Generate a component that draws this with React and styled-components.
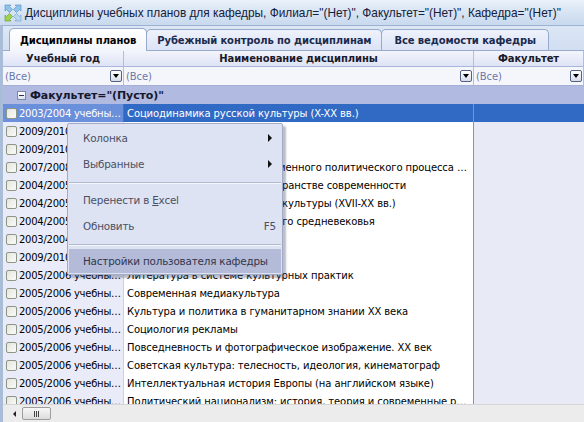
import React from "react";
import styled, { createGlobalStyle } from "styled-components";

const GlobalStyle = createGlobalStyle`
  html, body {
    margin: 0;
    padding: 0;
    background: #d4e0f1;
  }
  * {
    box-sizing: border-box;
  }
`;

const rows = [
  ["2003/2004 учебный год", "Социодинамика русской культуры (X-XX вв.)"],
  ["2009/2010 учебный год", "Культурология"],
  ["2009/2010 учебный год", "Теория культуры"],
  ["2007/2008 учебный год", "Особенности развития современного политического процесса в России"],
  ["2004/2005 учебный год", "Культура и искусство в пространстве современности"],
  ["2004/2005 учебный год", "Социальная история русской культуры (XVII-XX вв.)"],
  ["2004/2005 учебный год", "Культура западноевропейского средневековья"],
  ["2003/2004 учебный год", "Социология культуры"],
  ["2009/2010 учебный год", "Культурология"],
  ["2005/2006 учебный год", "Литература в системе культурных практик"],
  ["2005/2006 учебный год", "Современная медиакультура"],
  ["2005/2006 учебный год", "Культура и политика в гуманитарном знании XX века"],
  ["2005/2006 учебный год", "Социология рекламы"],
  ["2005/2006 учебный год", "Повседневность и фотографическое изображение. XX век"],
  ["2005/2006 учебный год", "Советская культура: телесность, идеология, кинематограф"],
  ["2005/2006 учебный год", "Интеллектуальная история Европы (на английском языке)"],
  ["2005/2006 учебный год", "Политический национализм: история, теория и современные реалии"],
];

const Window = styled.div`
  position: relative;
  width: 584px;
  height: 422px;
  overflow: hidden;
  display: flex;
  flex-direction: column;
  font-family: "DejaVu Sans", "Liberation Sans", sans-serif;
  font-size: 10px;
  letter-spacing: -0.1px;
  color: #000;
`;

const TitleBar = styled.div`
  height: 25px;
  flex: none;
  display: flex;
  align-items: center;
  gap: 3px;
  padding-left: 4px;
  background: linear-gradient(#eaf1fa, #d3e1f2 60%, #c9d9ee);
  font-family: "Liberation Sans", sans-serif;
  font-size: 11.85px;
  letter-spacing: 0;
  color: #15203a;
  white-space: nowrap;
`;

const Frame = styled.div`
  flex: 1;
  min-height: 0;
  display: flex;
  flex-direction: column;
  border-left: 3px solid #a9bcd8;
  border-top: 1px solid #9db1d2;
  background: #d7e3f3;
`;

const TabStrip = styled.div`
  height: 25px;
  flex: none;
  display: flex;
  align-items: flex-end;
  padding-left: 6px;
  background: linear-gradient(#dbe6f5, #d2dff1);
  border-bottom: 1px solid #9aabcf;
`;

const Tab = styled.div`
  height: ${(p) => (p.$active ? "23px" : "21px")};
  padding: 0 ${(p) => p.$pad}px;
  display: flex;
  align-items: center;
  font-weight: bold;
  font-size: 10px;
  color: ${(p) => (p.$active ? "#000" : "#1b2a4e")};
  border: 1px solid #98a9cc;
  border-bottom: none;
  border-radius: 5px 5px 0 0;
  margin-right: -1px;
  margin-bottom: ${(p) => (p.$active ? "-1px" : "0")};
  background: ${(p) =>
    p.$active
      ? "linear-gradient(#ffffff, #f2f5fc)"
      : "linear-gradient(#eef2fb, #dbe3f6)"};
  white-space: nowrap;
`;

const Grid = styled.div`
  flex: 1;
  min-height: 0;
  display: flex;
  flex-direction: column;
  background: #e8eaf6;
`;

const cols = "121px 350px 1fr";

const HeaderRow = styled.div`
  display: grid;
  grid-template-columns: ${cols};
  height: 16px;
  flex: none;
  background: linear-gradient(#f3f5fc, #dde3f6);
  border-bottom: 1px solid #aab6dc;
`;

const HeaderCell = styled.div`
  display: flex;
  align-items: center;
  justify-content: center;
  font-weight: bold;
  font-size: 10px;
  color: #1a1a2a;
  border-right: 1px solid #b3bde0;
  white-space: nowrap;
  overflow: hidden;
`;

const FilterRow = styled.div`
  display: grid;
  grid-template-columns: ${cols};
  height: 19px;
  flex: none;
  background: #f5f6fc;
  border-bottom: 1px solid #a5b0d8;
`;

const FilterCell = styled.div`
  display: flex;
  align-items: center;
  justify-content: space-between;
  padding: 0 1px 0 2px;
  color: #6b78a6;
  border-right: 1px solid #b3bde0;
  white-space: nowrap;
  overflow: hidden;
`;

const DropButton = styled.span`
  width: 12px;
  height: 12px;
  flex: none;
  border: 1px solid #55627f;
  border-radius: 2px;
  background: linear-gradient(#ffffff, #d6dcea);
  display: flex;
  align-items: center;
  justify-content: center;
  &::after {
    content: "";
    border-left: 3px solid transparent;
    border-right: 3px solid transparent;
    border-top: 4px solid #000;
  }
`;

const GroupRow = styled.div`
  height: 18px;
  flex: none;
  display: flex;
  align-items: center;
  gap: 4px;
  padding-left: 14px;
  background: #b1bae0;
  font-weight: bold;
  font-size: 11px;
  color: #15182c;
`;

const Expander = styled.span`
  width: 9px;
  height: 9px;
  border: 1px solid #7c86a6;
  background: linear-gradient(#ffffff, #dde2ee);
  display: flex;
  align-items: center;
  justify-content: center;
  &::after {
    content: "";
    width: 5px;
    height: 1px;
    background: #2a3250;
  }
`;

const Body = styled.div`
  flex: 1;
  min-height: 0;
  overflow: hidden;
`;

const Row = styled.div`
  display: grid;
  grid-template-columns: ${cols};
  height: 18px;
  color: ${(p) => (p.$selected ? "#fff" : "#000")};
`;

const Ellipsis = styled.span`
  overflow: hidden;
  text-overflow: ellipsis;
  white-space: nowrap;
`;

const YearCell = styled.div`
  display: flex;
  align-items: center;
  gap: 2px;
  padding: 0 1px 0 3px;
  letter-spacing: -0.25px;
  background: ${(p) => (p.$selected ? "#6a8fdb" : "#e9ecf8")};
  border-right: 1px solid ${(p) => (p.$selected ? "#4b6fc8" : "#c9d0ea")};
  overflow: hidden;
`;

const NameCell = styled.div`
  display: flex;
  align-items: center;
  padding: 0 2px 0 3px;
  background: ${(p) => (p.$selected ? "#316ac5" : "#ffffff")};
  border-right: 1px solid #7e92cf;
  overflow: hidden;
`;

const FacultyCell = styled.div`
  background: ${(p) => (p.$selected ? "#316ac5" : "transparent")};
`;

const Check = styled.span`
  width: 11px;
  height: 11px;
  flex: none;
  border: 1px solid #8d9584;
  border-radius: 2px;
  background: linear-gradient(135deg, #e4e4e0, #fbfbf9);
`;

const ScrollBar = styled.div`
  height: 18px;
  flex: none;
  display: flex;
  align-items: center;
  background: #ececec;
  border-top: 1px solid #d6d6d6;
  padding-left: 10px;
  gap: 6px;
`;

const ArrowLeft = styled.span`
  border-top: 3px solid transparent;
  border-bottom: 3px solid transparent;
  border-right: 3px solid #222;
`;

const Thumb = styled.span`
  width: 29px;
  height: 13px;
  border: 1px solid #9d9d9d;
  border-radius: 2px;
  background: linear-gradient(#f8f8f8, #dcdcdc);
  display: flex;
  align-items: center;
  justify-content: center;
  gap: 1px;
  i {
    width: 1px;
    height: 6px;
    background: #444;
  }
`;

const Menu = styled.div`
  position: absolute;
  left: 67px;
  top: 123px;
  width: 216px;
  padding: 1px;
  background: #dde3f3;
  border: 1px solid #a3abc4;
  border-radius: 2px;
  box-shadow: 3px 3px 2px rgba(60, 70, 100, 0.35);
  font-family: "DejaVu Sans", sans-serif;
  font-size: 10.4px;
  letter-spacing: -0.2px;
  color: #4a5064;
`;

const MenuItem = styled.div`
  height: ${(p) => p.$h || 26}px;
  display: flex;
  align-items: center;
  justify-content: space-between;
  padding: 0 5px 0 14px;
  white-space: nowrap;
  background: ${(p) => (p.$hover ? "#b4bbd9" : "transparent")};
  color: ${(p) => (p.$hover ? "#31374c" : "#4a5064")};
`;

const Separator = styled.div`
  height: 10px;
  display: flex;
  align-items: center;
  &::after {
    content: "";
    flex: 1;
    height: 1px;
    background: #b2b9d3;
    box-shadow: 0 1px 0 #f4f6fc;
  }
`;

const SubArrow = styled.span`
  border-top: 4px solid transparent;
  border-bottom: 4px solid transparent;
  border-left: 4px solid #111;
  margin-right: 4px;
`;

const AppIcon = () => (
  <svg width="18" height="18" viewBox="0 0 18 18">
    <path d="M1 1 L7 1 L5.5 2.5 L8.5 5.5 L5.5 8.5 L2.5 5.5 L1 7 Z" fill="#8fc3ea" stroke="#4f8cc4" strokeWidth="0.6" />
    <path d="M17 1 L17 7 L15.5 5.5 L12.5 8.5 L9.5 5.5 L12.5 2.5 L11 1 Z" fill="#8fc3ea" stroke="#4f8cc4" strokeWidth="0.6" />
    <path d="M1 17 L1 11 L2.5 12.5 L5.5 9.5 L8.5 12.5 L5.5 15.5 L7 17 Z" fill="#9fd34a" stroke="#5f9a20" strokeWidth="0.6" />
    <path d="M17 17 L11 17 L12.5 15.5 L9.5 12.5 L12.5 9.5 L15.5 12.5 L17 11 Z" fill="#b7d7ee" stroke="#6f9ccc" strokeWidth="0.6" />
  </svg>
);

export default function App() {
  return (
    <Window>
      <GlobalStyle />
      <TitleBar>
        <AppIcon />
        Дисциплины учебных планов для кафедры, Филиал="(Нет)", Факультет="(Нет)", Кафедра="(Нет)"
      </TitleBar>
      <Frame>
        <TabStrip>
          <Tab $active $pad={10}>Дисциплины планов</Tab>
          <Tab $pad={10}>Рубежный контроль по дисциплинам</Tab>
          <Tab $pad={12}>Все ведомости кафедры</Tab>
        </TabStrip>
        <Grid>
          <HeaderRow>
            <HeaderCell>Учебный год</HeaderCell>
            <HeaderCell>Наименование дисциплины</HeaderCell>
            <HeaderCell>Факультет</HeaderCell>
          </HeaderRow>
          <FilterRow>
            <FilterCell>
              (Все)
              <DropButton />
            </FilterCell>
            <FilterCell>
              (Все)
              <DropButton />
            </FilterCell>
            <FilterCell>
              (Все)
              <DropButton />
            </FilterCell>
          </FilterRow>
          <GroupRow>
            <Expander />
            Факультет="(Пусто)"
          </GroupRow>
          <Body>
            {rows.map(([year, name], i) => (
              <Row key={i} $selected={i === 0}>
                <YearCell $selected={i === 0}>
                  <Check />
                  <Ellipsis>{year}</Ellipsis>
                </YearCell>
                <NameCell $selected={i === 0}>
                  <Ellipsis>{name}</Ellipsis>
                </NameCell>
                <FacultyCell $selected={i === 0} />
              </Row>
            ))}
          </Body>
          <ScrollBar>
            <ArrowLeft />
            <Thumb>
              <i />
              <i />
              <i />
            </Thumb>
          </ScrollBar>
        </Grid>
      </Frame>
      <Menu>
        <MenuItem>
          Колонка
          <SubArrow />
        </MenuItem>
        <MenuItem>
          Выбранные
          <SubArrow />
        </MenuItem>
        <Separator />
        <MenuItem>
          <span>
            Перенести в <u>E</u>xcel
          </span>
        </MenuItem>
        <MenuItem>
          Обновить
          <span>F5</span>
        </MenuItem>
        <Separator />
        <MenuItem $hover $h={24}>
          Настройки пользователя кафедры
        </MenuItem>
      </Menu>
    </Window>
  );
}
